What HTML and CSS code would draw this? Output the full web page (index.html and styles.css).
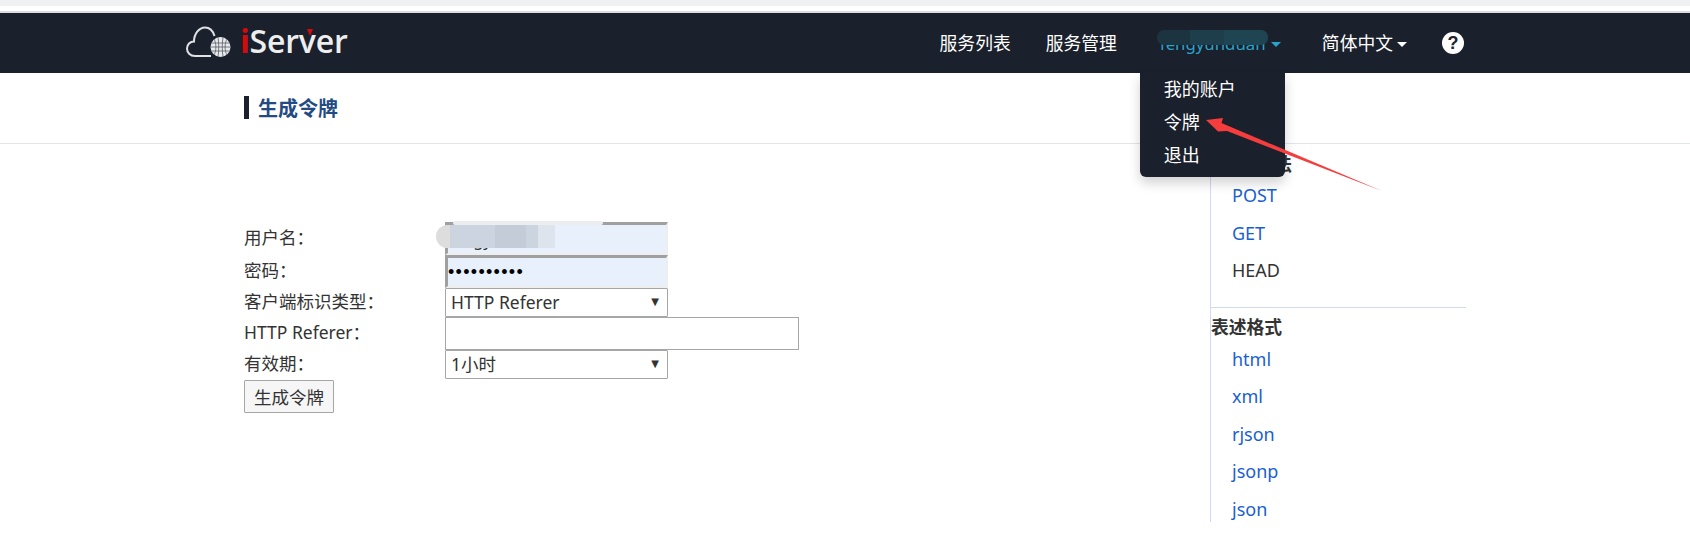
FILE: index.html
```html
<!DOCTYPE html>
<html lang="zh">
<head>
<meta charset="utf-8">
<title>生成令牌</title>
<link rel="stylesheet" href="styles.css">
</head>
<body>
<div class="browser-strip"></div>
<header class="navbar">
  <div class="logo">
    <svg class="logo-icon" width="46" height="33" viewBox="0 0 46 33" fill="none">
      <path d="M25 30H9C4 30 1 26.500 1 22.500C1 18.500 4 15.500 8 15.500C8 8 13 1.500 19 1.500C24 1.500 27 5 28.500 10" stroke="#dfe1e3" stroke-width="2"/>
      <circle cx="34.500" cy="21" r="10" fill="#e8e9eb"/>
      <path d="M25 17H44M24.500 21H44.500M25 25H44M28 13C30.500 17 30.500 25 28 29M32 11.500C33 17 33 25 32 30.500M37 11.500C36 17 36 25 37 30.500M41 13C38.500 17 38.500 25 41 29" stroke="#565b66" stroke-width="0.800"/>
    </svg>
    <span class="logo-text"><span class="logo-i">i</span>Server</span>
    <span class="logo-mark"></span>
  </div>
  <nav class="nav">
    <a class="nav-link">服务列表</a>
    <a class="nav-link nav-b">服务管理</a>
    <a class="nav-link nav-user"><span class="user-name">fengyunduan</span><i class="caret caret-blue"></i>
      <span class="smear"></span>
      <div class="dropdown">
        <div class="drop-item">我的账户</div>
        <div class="drop-item">令牌</div>
        <div class="drop-item">退出</div>
      </div>
    </a>
    <a class="nav-link nav-lang">简体中文<i class="caret caret-lang"></i></a>
    <span class="help">?</span>
  </nav>
</header>
<section class="title-bar">
  <h1 class="title">生成令牌</h1>
</section>
<main class="main">
  <form class="form">
    <label class="lbl">用户名：</label>
    <div class="field"><span class="val">fengyunduan</span><span class="smear2"></span><span class="smear3"></span></div>
    <label class="lbl">密码：</label>
    <div class="field"><span class="dots">••••••••••</span></div>
    <label class="lbl">客户端标识类型：</label>
    <div class="select"><span>HTTP Referer</span><i class="sel-arrow">▼</i></div>
    <label class="lbl">HTTP Referer：</label>
    <div class="plain-input"></div>
    <label class="lbl">有效期：</label>
    <div class="select"><span>1小时</span><i class="sel-arrow">▼</i></div>
    <button type="button" class="btn">生成令牌</button>
  </form>
  <aside class="side">
    <h3 class="side-head">HTTP方法</h3>
    <ul class="side-list">
      <li><a class="link">POST</a></li>
      <li><a class="link">GET</a></li>
      <li>HEAD</li>
    </ul>
    <hr class="side-rule">
    <h3 class="side-head">表述格式</h3>
    <ul class="side-list side-list-formats">
      <li><a class="link">html</a></li>
      <li><a class="link">xml</a></li>
      <li><a class="link">rjson</a></li>
      <li><a class="link">jsonp</a></li>
      <li><a class="link">json</a></li>
    </ul>
  </aside>
</main>
<svg class="arrow" width="190" height="80" viewBox="0 0 190 80">
  <path d="M6 5L23 3L21.500 8L182 76L27 16L18 16.500Z" fill="#f63d3d"/>
</svg>
</body>
</html>
```
FILE: styles.css
```css
* { box-sizing: border-box; }
html, body { margin: 0; padding: 0; }
body {
  width: 1690px;
  height: 550px;
  overflow: hidden;
  background: #fff;
  color: #333;
  font-family: "Noto Sans", "Noto Sans CJK SC", sans-serif;
  font-size: 18px;
  position: relative;
}
.browser-strip {
  height: 13px;
  background: #fff;
  border-top: 6px solid #f0f1f3;
  border-bottom: 2px solid #dcdde0;
}
.navbar {
  height: 60px;
  background: #1a202c;
  display: flex;
  align-items: center;
  justify-content: space-between;
  padding-left: 186px;
  padding-right: 226px;
  color: #fff;
}
.logo {
  display: flex;
  align-items: center;
  position: relative;
  height: 40px;
}
.logo-icon { margin-top: -1px; }
.logo-text {
  font-family: "Open Sans", sans-serif;
  font-size: 32px;
  font-weight: 600;
  line-height: 40px;
  letter-spacing: -0.200px;
  color: #eeeeee;
  margin-left: 8px;
  margin-top: -5px;
}
.logo-i { color: #d40b0b; font-weight: 700; }
.logo-mark {
  position: absolute;
  left: 121px;
  top: 6px;
  border-left: 3.500px solid transparent;
  border-right: 3.500px solid transparent;
  border-top: 7px solid #d40b0b;
}
.nav { display: flex; align-items: center; }
.nav-link {
  color: #fff;
  line-height: 24px;
  position: relative;
  display: block;
  white-space: nowrap;
  font-size: 17.800px;
}
.nav-b { margin-left: 35px; }
.nav-user { margin-left: 43px; color: #2aa3cb; width: 117px; }
.user-name { font-size: 16.800px; }
.nav-lang { margin-left: 45px; }
.caret {
  display: inline-block;
  margin-left: 5px;
  vertical-align: 3px;
  border-left: 5px solid transparent;
  border-right: 5px solid transparent;
  border-top: 5px solid #fff;
}
.caret-lang { margin-left: 4px; }
.caret-blue { border-top-color: #2aa3cb; }
.smear {
  position: absolute;
  left: -3px;
  top: -1px;
  width: 111px;
  height: 15px;
  border-radius: 7px;
  background: linear-gradient(90deg, #1c3340 0 30%, #1e3e4c 30% 60%, #204552 60%);
}
.dropdown {
  position: absolute;
  left: -20px;
  top: 42px;
  width: 145px;
  height: 104px;
  background: #1a202c;
  border-radius: 0 0 6px 6px;
  box-shadow: 0 6px 12px rgba(0, 0, 0, .18);
  z-index: 5;
  font-size: 18px;
}
.drop-item {
  height: 33px;
  line-height: 33px;
  padding-left: 24px;
  color: #fff;
}
.help {
  margin-left: 35px;
  width: 22px;
  height: 22px;
  border-radius: 50%;
  background: #fff;
  color: #1a202c;
  font: bold 18px/22px "Liberation Sans", sans-serif;
  text-align: center;
}
.title-bar {
  height: 71px;
  border-bottom: 1px solid #e2e4e8;
  padding-left: 244px;
  padding-top: 23px;
}
.title {
  margin: 0;
  height: 23px;
  border-left: 5px solid #1a202c;
  padding-left: 9px;
  font-size: 20px;
  line-height: 25px;
  font-weight: 700;
  color: #234a82;
}
.main {
  display: flex;
  justify-content: space-between;
  padding-left: 244px;
  padding-right: 224px;
}
.form {
  display: grid;
  grid-template-columns: 201px auto;
  justify-items: start;
  align-items: center;
  align-content: start;
  padding-top: 78px;
  line-height: 24px;
  font-size: 17.500px;
}
.lbl { white-space: nowrap; padding-bottom: 3px; }
.field {
  width: 223px;
  height: 33px;
  background: #e8f0fb;
  border: solid;
  border-width: 3px 2px 2px 3px;
  border-color: #a0a0a0 #eeeeee #eeeeee #a0a0a0;
  line-height: 27px;
  position: relative;
}
.val { padding-left: 0; font-size: 16.500px; line-height: 29px; }
.smear2 {
  position: absolute;
  left: -12px;
  top: 0;
  width: 119px;
  height: 23px;
  border-radius: 12px 0 0 12px;
  background: linear-gradient(90deg, #dddddd 0 12%, #ccd4e0 12% 50%, #c4ccd8 50% 76%, #ccd4e0 76% 86%, #dde4ee 86%);
}
.smear3 {
  position: absolute;
  left: 5px;
  top: -4px;
  width: 150px;
  height: 4px;
  border-radius: 3px;
  background: #ecedef;
}
.dots {
  color: #000;
  font-family: "Liberation Sans", sans-serif;
  font-size: 18px;
  letter-spacing: 1.300px;
}
.select {
  width: 223px;
  height: 29px;
  border: 1px solid #a6a6a6;
  border-radius: 1px;
  background: #fff;
  padding: 0 5px 2px;
  display: flex;
  align-items: center;
  justify-content: space-between;
  line-height: 26px;
}
.sel-arrow {
  font-style: normal;
  font-size: 10px;
  color: #333;
  font-family: "DejaVu Sans", sans-serif;
  padding-right: 3px;
}
.plain-input {
  width: 354px;
  height: 33px;
  border: 1px solid #a6a6a6;
  background: #fff;
}
.btn {
  grid-column: 1 / span 2;
  margin-top: 1px;
  width: 90px;
  height: 33px;
  padding: 0;
  border: 1px solid #a6a6a6;
  border-radius: 1px;
  background: #f6f6f6;
  color: #333;
  font: inherit;
}
.side {
  width: 256px;
  height: 370px;
  margin-top: 8px;
  border-left: 1px solid #d0daf0;
}
.side-head {
  margin: 0;
  font-size: 17.800px;
  font-weight: 700;
  line-height: 24px;
}
.side-list {
  list-style: none;
  margin: 1px 0 0;
  padding: 0 0 0 21px;
}
.side-list-formats { margin-top: 2px; }
.side-list li { height: 37.500px; line-height: 37.500px; }
.side-rule {
  margin: 17px 0 7px;
  border: 0;
  border-top: 1px solid #d0daf0;
}
.link { color: #1a5fd0; }
.arrow {
  position: absolute;
  left: 1200px;
  top: 115px;
  z-index: 10;
}
```
